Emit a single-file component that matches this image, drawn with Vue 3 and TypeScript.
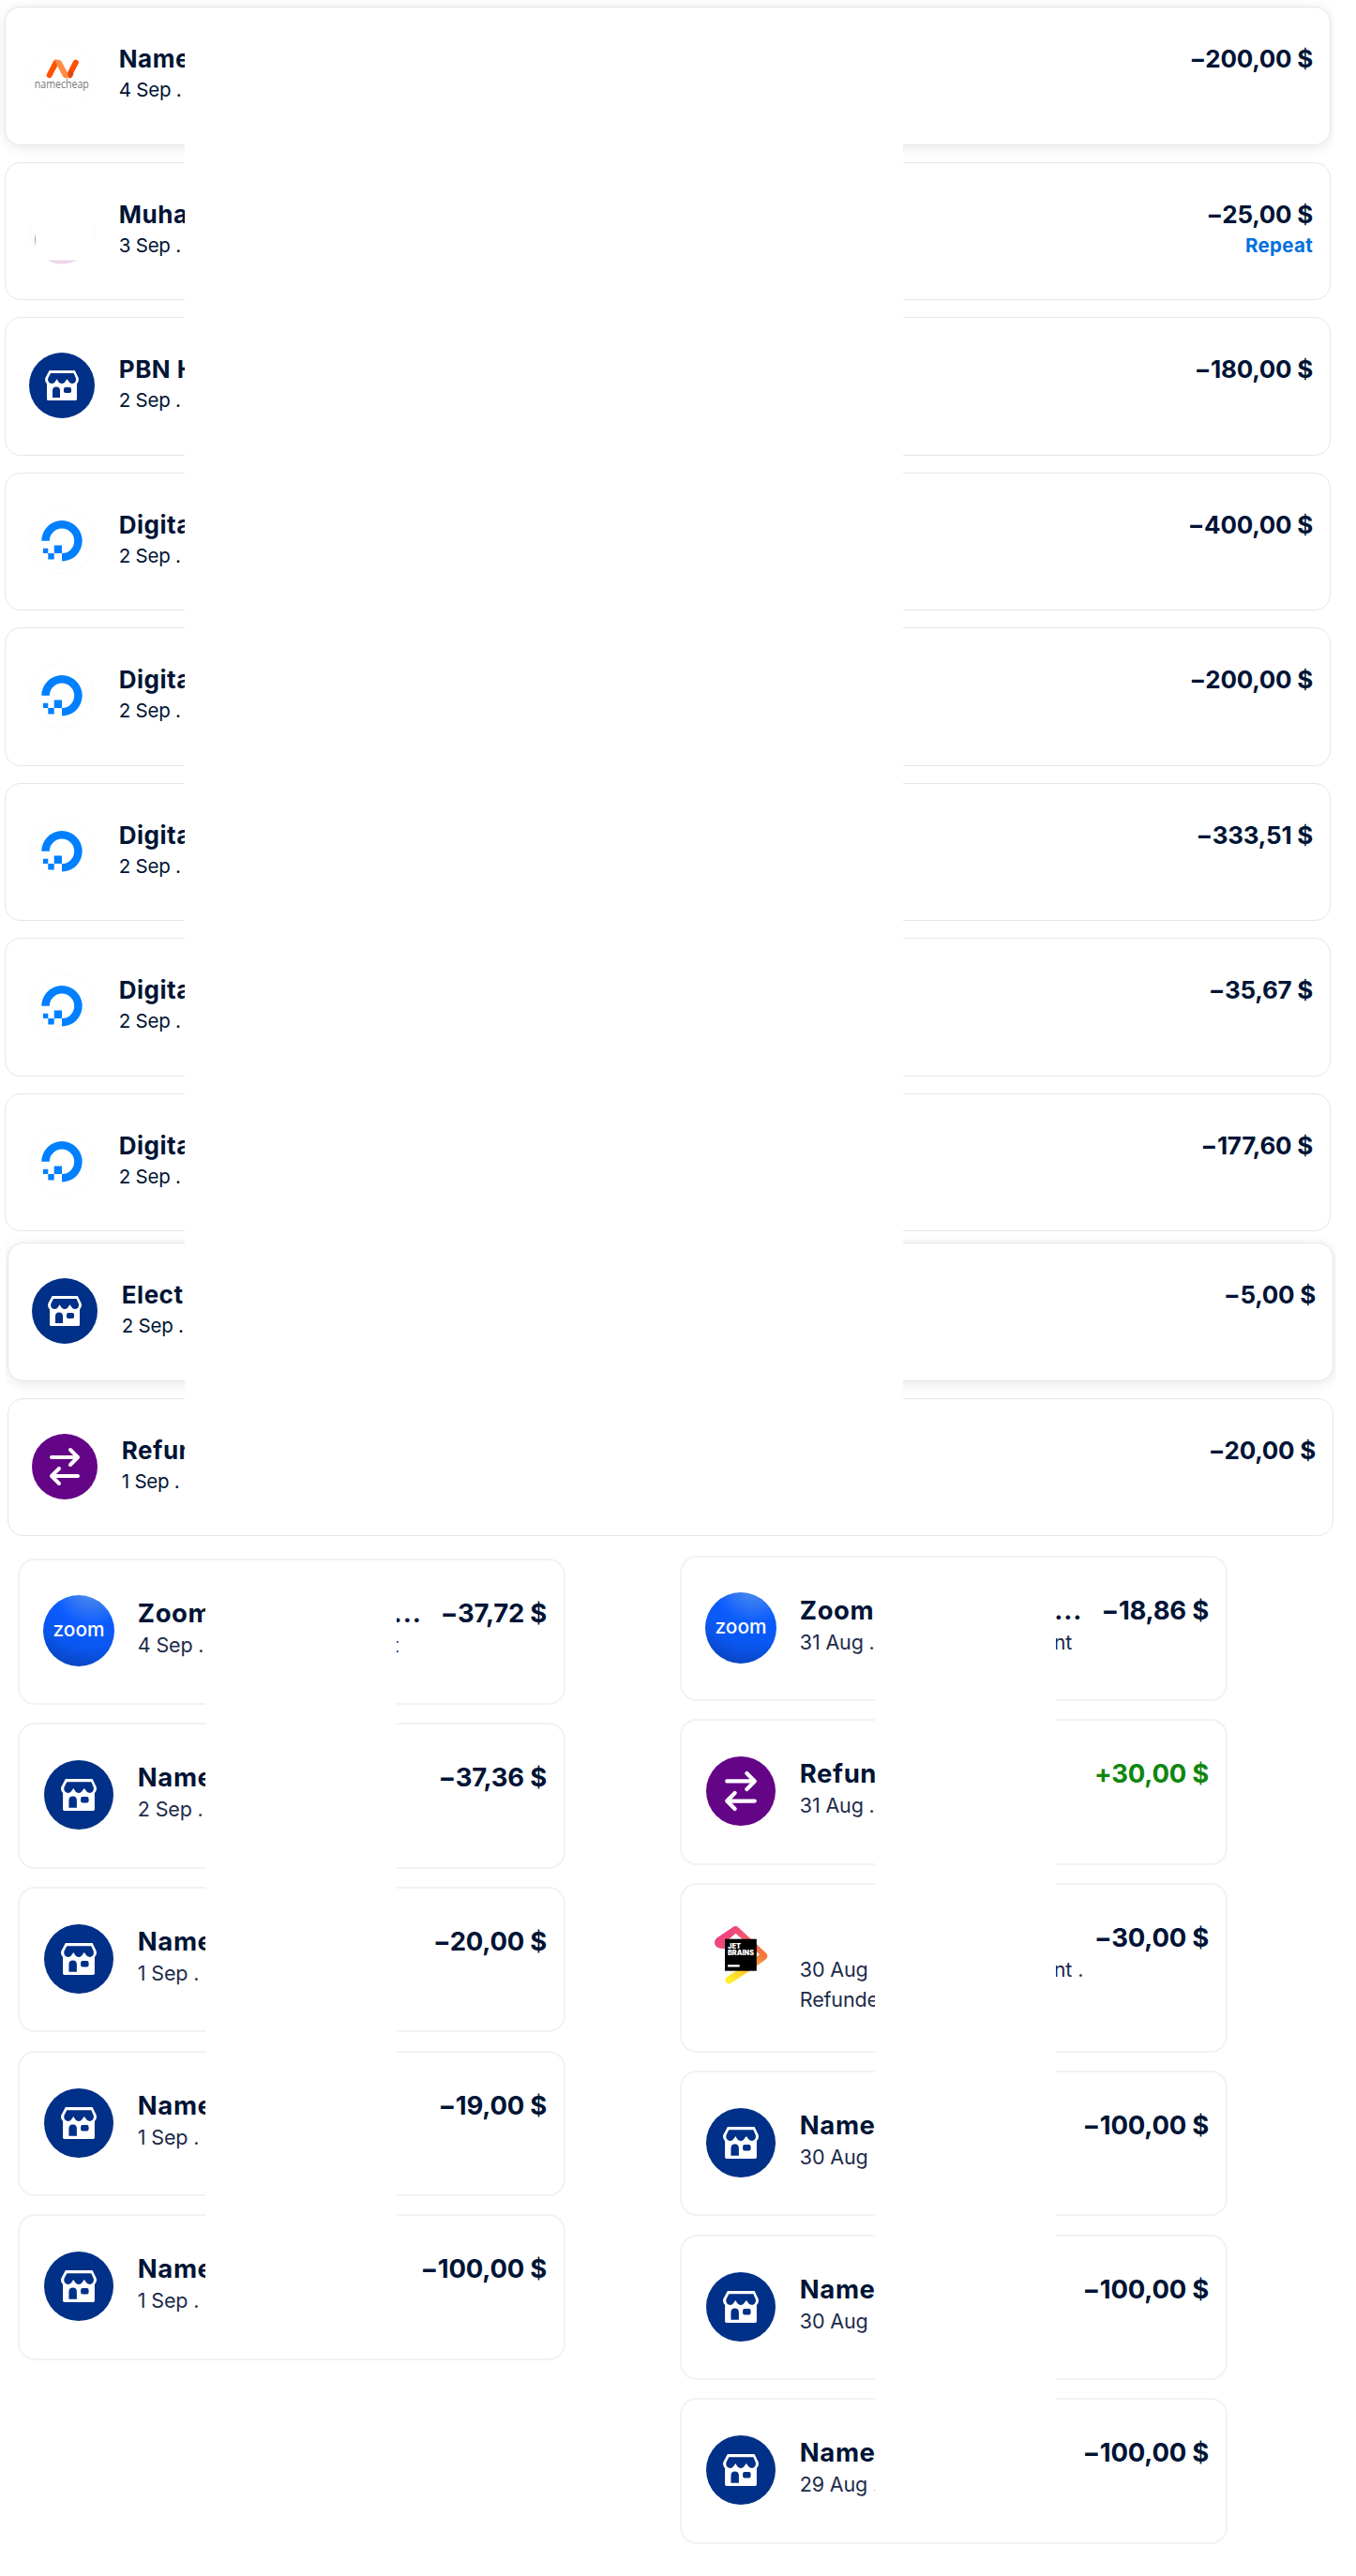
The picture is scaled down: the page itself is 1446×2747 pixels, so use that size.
<script setup lang="ts">
type IconKind = 'namecheap' | 'avatar' | 'store' | 'ocean' | 'refund' | 'zoom' | 'jetbrains'

interface Transaction {
  icon: IconKind
  title: string
  titleTail?: string
  date: string
  dateTail?: string
  note?: string
  amount: string
  action?: string
  raised?: boolean
  positive?: boolean
}

interface Group {
  name: string
  items: Transaction[]
}

const recent: Group = {
  name: 'recent',
  items: [
    { icon: 'namecheap', title: 'Name', date: '4 Sep .', amount: '−200,00 $', raised: true },
    { icon: 'avatar', title: 'Muha', date: '3 Sep .', amount: '−25,00 $', action: 'Repeat' },
    { icon: 'store', title: 'PBN H', date: '2 Sep .', amount: '−180,00 $' },
    { icon: 'ocean', title: 'Digita', date: '2 Sep .', amount: '−400,00 $' },
    { icon: 'ocean', title: 'Digita', date: '2 Sep .', amount: '−200,00 $' },
    { icon: 'ocean', title: 'Digita', date: '2 Sep .', amount: '−333,51 $' },
    { icon: 'ocean', title: 'Digita', date: '2 Sep .', amount: '−35,67 $' },
    { icon: 'ocean', title: 'Digita', date: '2 Sep .', amount: '−177,60 $' },
  ],
}

const earlier: Group = {
  name: 'earlier',
  items: [
    { icon: 'store', title: 'Elect', date: '2 Sep .', amount: '−5,00 $', raised: true },
    { icon: 'refund', title: 'Refun', date: '1 Sep .', amount: '−20,00 $' },
  ],
}

const left: Group = {
  name: 'left',
  items: [
    { icon: 'zoom', title: 'Zoom', titleTail: '...', date: '4 Sep .', dateTail: 't', amount: '−37,72 $' },
    { icon: 'store', title: 'Name', date: '2 Sep .', amount: '−37,36 $' },
    { icon: 'store', title: 'Name', date: '1 Sep .', amount: '−20,00 $' },
    { icon: 'store', title: 'Name', date: '1 Sep .', amount: '−19,00 $' },
    { icon: 'store', title: 'Name', date: '1 Sep .', amount: '−100,00 $' },
  ],
}

const right: Group = {
  name: 'right',
  items: [
    { icon: 'zoom', title: 'Zoom', titleTail: '...', date: '31 Aug .', dateTail: 'nt', amount: '−18,86 $' },
    { icon: 'refund', title: 'Refun', date: '31 Aug .', amount: '+30,00 $', positive: true },
    { icon: 'jetbrains', title: '', date: '30 Aug .', dateTail: 'nt .', note: 'Refunde', amount: '−30,00 $' },
    { icon: 'store', title: 'Name', date: '30 Aug .', amount: '−100,00 $' },
    { icon: 'store', title: 'Name', date: '30 Aug .', amount: '−100,00 $' },
    { icon: 'store', title: 'Name', date: '29 Aug .', amount: '−100,00 $' },
  ],
}

const rows: Group[][] = [[recent], [earlier], [left, right]]
</script>

<template>
  <main class="page">
    <div v-for="(row, r) in rows" :key="r" class="row">
      <section v-for="group in row" :key="group.name" class="group" :class="group.name">
        <article
          v-for="(t, i) in group.items"
          :key="i"
          class="card"
          :class="{ raised: t.raised, tall: t.note }"
        >
          <div class="icon">
            <svg v-if="t.icon === 'store'" viewBox="0 0 70 70">
              <circle cx="35" cy="35" r="35" fill="#003087" />
              <path
                d="M21.6 19h27.2l4 8.2c.4 2.6-.2 4.400-1.800 6v16.300c0 .9-.6 1.500-1.500 1.500h-29c-.9 0-1.500-.6-1.500-1.500V33.200c-1.600-1.600-2.200-3.400-1.800-6z"
                fill="#fff"
              />
              <path
                d="M23 22h24.600l2.300 5.300c.7 3.200-1 5.700-3.700 5.700-2.200 0-3.600-1.300-4.200-2.700l-1.500-2-1.500 2c-.7 1.500-2 2.700-4 2.700s-3.500-1.200-4.200-2.700l-1.200-2-1.300 2c-.7 1.500-2 2.700-4.200 2.700-2.800 0-4.500-2.500-3.800-5.700z"
                fill="#003087"
              />
              <path d="M25 48v-7.500c0-2.600 1.500-4 4-4s4 1.400 4 4V48z" fill="#003087" />
              <rect x="37" y="37" width="8" height="6" rx="1.800" fill="#003087" />
            </svg>

            <svg v-else-if="t.icon === 'refund'" viewBox="0 0 70 70">
              <circle cx="35" cy="35" r="35" fill="#640487" />
              <g fill="none" stroke="#fff" stroke-width="4" stroke-linecap="round" stroke-linejoin="round">
                <path d="M21 25h28M41 17l8 8-8 8" />
                <path d="M49 45H21M29 37l-8 8 8 8" />
              </g>
            </svg>

            <svg v-else-if="t.icon === 'ocean'" viewBox="0 0 70 70">
              <circle cx="35" cy="35" r="34.500" fill="#fff" stroke="#fbfbfb" />
              <path
                d="M13.300 34.800a21.700 21.700 0 1 1 21.700 21.700v-8.500a13.200 13.200 0 1 0-13.200-13.200z"
                fill="#0080ff"
              />
              <path d="M26.700 39.500H35V48h-8.300zM20.300 48h6.400v6.500h-6.400zM15 42.700h5.300V48H15z" fill="#0080ff" />
            </svg>

            <svg v-else-if="t.icon === 'namecheap'" viewBox="0 0 70 70">
              <circle cx="35" cy="35" r="34.500" fill="#fff" stroke="#fcfcfc" />
              <g fill="none" stroke="#ff5100" stroke-width="6" stroke-linecap="round">
                <path d="M21.700 35.200l7-13.500" />
                <path d="M42.800 35.200l7-13.500" />
              </g>
              <path d="M27 18.700h4.500c1.600 0 2.500.8 3.300 2.200L44 38.200h-4.600c-1.900 0-2.900-.8-3.700-2.300L28.500 22z" fill="#ff8c44" />
              <path d="M43.300 38.200c1.300 0 2.300-.6 2.900-1.600l1.300-2.500-2.800-5.300-3.500 6z" fill="#e0451a" />
              <text x="34.800" y="49" textLength="58" lengthAdjust="spacingAndGlyphs" class="namecheap-word">namecheap</text>
            </svg>

            <svg v-else-if="t.icon === 'avatar'" viewBox="0 0 70 70">
              <path d="M19.500 66.500h31.500a35 35 0 0 1-31.500 0z" fill="#ecd6ea" />
              <path d="M7 37.500v13.500a32 32 0 0 1-.8-7.500z" fill="#85888b" />
              <path d="M2 27a34 34 0 0 0 5 28" fill="none" stroke="#f3f7f9" stroke-width="1" />
              <path d="M69.500 30v13" fill="none" stroke="#f6f6f8" stroke-width="1" />
            </svg>

            <svg v-else-if="t.icon === 'zoom'" class="zoom" viewBox="0 0 76 76">
              <defs>
                <radialGradient id="zoom-fill" cx="0.680" cy="-0.120" r="1.150">
                  <stop offset="0" stop-color="#5796ee" />
                  <stop offset="0.200" stop-color="#3a7df2" />
                  <stop offset="0.480" stop-color="#0b5cff" />
                  <stop offset="0.750" stop-color="#0a57f0" />
                  <stop offset="1" stop-color="#0845c4" />
                </radialGradient>
              </defs>
              <circle cx="38" cy="38" r="38" fill="url(#zoom-fill)" />
              <text x="38" y="44" textLength="55" lengthAdjust="spacingAndGlyphs" class="zoom-word">zoom</text>
            </svg>

            <svg v-else viewBox="0 0 74 74">
              <defs>
                <linearGradient id="jb-a" x1="0" y1="0.300" x2="1" y2="1">
                  <stop offset="0" stop-color="#ee3d8b" />
                  <stop offset="0.450" stop-color="#f25c62" />
                  <stop offset="1" stop-color="#f68438" />
                </linearGradient>
                <linearGradient id="jb-b" x1="1" y1="0" x2="0" y2="1">
                  <stop offset="0" stop-color="#f37a3c" />
                  <stop offset="0.700" stop-color="#fbd430" />
                  <stop offset="1" stop-color="#fdf02c" />
                </linearGradient>
              </defs>
              <path
                d="M11.500 18.500L28.300 7.200Q31.500 4.700 34.500 7.400L64 34.800Q67 38 63.500 41L58.500 37.500L31.500 13.800L22 22L24 30H18Q9 30 9 23.500Q9 20.300 11.500 18.500z"
                fill="url(#jb-a)"
              />
              <path d="M61 38.200L45 50L24.500 63.300" fill="none" stroke="url(#jb-b)" stroke-width="8" stroke-linecap="round" stroke-linejoin="round" />
              <rect x="20" y="19.700" width="33.800" height="34" fill="#000" />
              <text x="23" y="30" textLength="14" lengthAdjust="spacingAndGlyphs" class="jb-word">JET</text>
              <text x="23" y="37.200" textLength="28" lengthAdjust="spacingAndGlyphs" class="jb-word">BRAINS</text>
              <rect x="23" y="47.200" width="12.700" height="2.300" fill="#fff" />
            </svg>
          </div>

          <div class="body">
            <div class="title">
              <span>{{ t.title }}</span>
              <span v-if="t.titleTail" class="dots">{{ t.titleTail }}</span>
            </div>
            <div class="meta">
              <span class="date">{{ t.date }}</span>
              <span v-if="t.dateTail">{{ t.dateTail }}</span>
            </div>
            <div v-if="t.note" class="meta note">{{ t.note }}</div>
          </div>

          <div class="side">
            <div class="amount" :class="{ positive: t.positive }">{{ t.amount }}</div>
            <div v-if="t.action" class="action">{{ t.action }}</div>
          </div>
        </article>
        <div class="cover" />
      </section>
    </div>
  </main>
</template>

<style>
body {
  background: #fff;
}
</style>

<style scoped>
.page {
  width: 1446px;
  height: 2747px;
  overflow: hidden;
  background: #fff;
  color: #001435;
  font-family: Inter, 'Liberation Sans', sans-serif;
}

.row {
  display: flex;
}

.group {
  position: relative;
  display: flex;
  flex-direction: column;
  box-sizing: border-box;
  overflow: hidden;
}

.cover {
  position: absolute;
  background: #fff;
}

.recent {
  width: 1422px;
  height: 1317px;
  padding: 7.400px 3px 0 5px;
  gap: 18px;
}

.recent .cover {
  left: 197px;
  top: 30px;
  bottom: 0;
  width: 766px;
}

.earlier {
  width: 1419px;
  height: 337px;
  margin-left: 6px;
  padding: 8.300px 3px 0 2px;
  gap: 18.200px;
}

.earlier .card {
  height: 147.300px;
}

.earlier .cover {
  left: 191px;
  top: 0;
  bottom: 40px;
  width: 766px;
}

.card {
  display: flex;
  flex: none;
  box-sizing: border-box;
  height: 147.500px;
  padding: 37px 18px 0 25px;
  border: 1px solid #e6e6e6;
  border-radius: 17px;
  background: #fff;
}

.raised {
  box-shadow: 0 2px 14px rgba(0, 0, 0, 0.1);
}

.icon {
  flex: none;
  width: 70px;
  height: 70px;
}

.icon svg {
  display: block;
  width: 100%;
  height: 100%;
  overflow: visible;
}

.body {
  flex: 1;
  min-width: 0;
  margin-left: 25.800px;
}

.body,
.side {
  padding-top: 2px;
}

.title,
.amount {
  height: 33px;
  line-height: 32px;
  font-size: 26px;
  font-weight: 700;
  letter-spacing: -0.270px;
  white-space: nowrap;
}

.title {
  display: flex;
  justify-content: space-between;
  letter-spacing: 0.500px;
}

.meta,
.action {
  display: flex;
  height: 32px;
  line-height: 32px;
  font-size: 20.500px;
  letter-spacing: -0.250px;
  white-space: pre;
}

.side {
  flex: none;
  text-align: right;
}

.action {
  display: block;
  color: #0070e0;
  font-weight: 700;
  letter-spacing: 0.300px;
}

.positive {
  color: #0f870f;
}

.left,
.right {
  gap: 19.250px;
}

.left {
  width: 603px;
  padding: 8.300px 0 0 19px;
}

.right {
  width: 584px;
  margin-left: 122px;
  padding: 4.500px 0 0;
}

.left .cover {
  left: 219px;
  top: 30px;
  height: 800px;
  width: 204px;
}

.right .cover {
  left: 208px;
  top: 30px;
  height: 1000px;
  width: 193px;
}

.left .card,
.right .card {
  width: 584px;
  height: 155.500px;
  padding: 38px 18px 0 26px;
  border: 2px solid #f2f2f2;
  border-radius: 18px;
}

.right .card.tall {
  height: 180.500px;
}

.left .icon,
.right .icon {
  width: 74px;
  height: 74px;
}

.icon .zoom {
  width: 76px;
  height: 76px;
  margin: -1px;
}

.left .title,
.left .amount,
.right .title,
.right .amount {
  height: 34px;
  line-height: 33px;
  font-size: 27.500px;
}

.left .amount,
.right .amount {
  letter-spacing: -0.250px;
}

.left .title,
.right .title {
  letter-spacing: 0.600px;
}

.left .title .dots,
.right .title .dots {
  margin-right: 20px;
  letter-spacing: 0.900px;
}

.left .meta,
.right .meta {
  color: #1c2b4a;
  font-size: 21.500px;
  letter-spacing: -0.150px;
}

.left .date {
  width: 271.500px;
}

.right .date {
  width: 271px;
}

.namecheap-word {
  font-family: 'Open Sans', sans-serif;
  font-size: 12px;
  font-weight: 400;
  fill: #77787b;
  text-anchor: middle;
}

.zoom-word {
  font-family: Inter, sans-serif;
  font-size: 22px;
  font-weight: 500;
  fill: #fff;
  text-anchor: middle;
}

.jb-word {
  font-family: Inter, sans-serif;
  font-size: 7.500px;
  font-weight: 900;
  fill: #fff;
}
</style>
